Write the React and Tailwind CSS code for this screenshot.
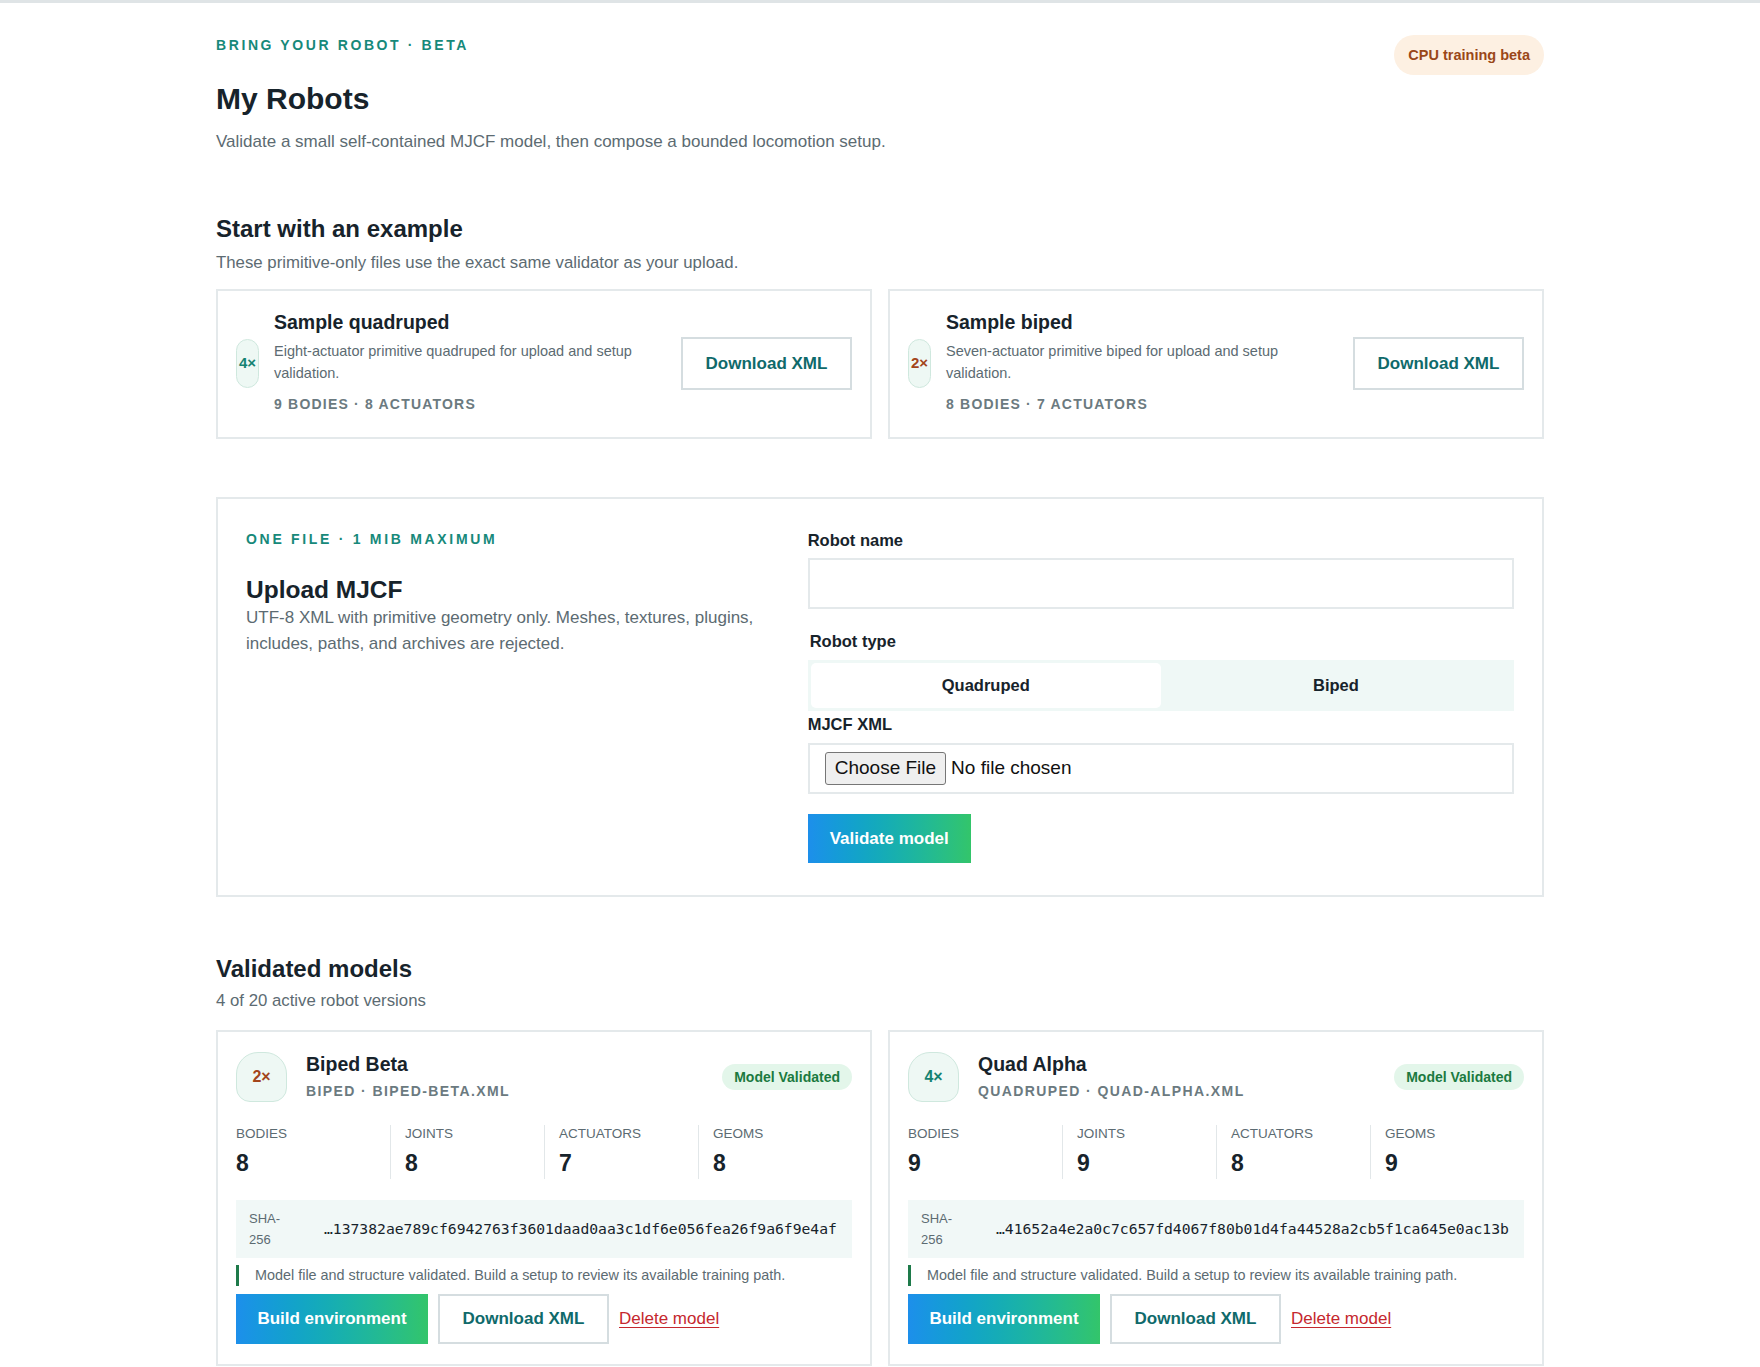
import { useState } from "react";

const samples = [
  {
    id: "quad",
    badge: "4×",
    badgeColor: "text-[#148272]",
    title: "Sample quadruped",
    desc: "Eight-actuator primitive quadruped for upload and setup validation.",
    meta: "9 bodies · 8 actuators",
  },
  {
    id: "biped",
    badge: "2×",
    badgeColor: "text-[#a3451b]",
    title: "Sample biped",
    desc: "Seven-actuator primitive biped for upload and setup validation.",
    meta: "8 bodies · 7 actuators",
  },
];

const models = [
  {
    id: "biped-beta",
    badge: "2×",
    badgeColor: "text-[#a3451b]",
    name: "Biped Beta",
    meta: "Biped · biped-beta.xml",
    stats: { Bodies: 8, Joints: 8, Actuators: 7, Geoms: 8 },
    sha: "…137382ae789cf6942763f3601daad0aa3c1df6e056fea26f9a6f9e4af",
  },
  {
    id: "quad-alpha",
    badge: "4×",
    badgeColor: "text-[#148272]",
    name: "Quad Alpha",
    meta: "Quadruped · quad-alpha.xml",
    stats: { Bodies: 9, Joints: 9, Actuators: 8, Geoms: 9 },
    sha: "…41652a4e2a0c7c657fd4067f80b01d4fa44528a2cb5f1ca645e0ac13b",
  },
];

const SampleCard = ({ sample }) => (
  <div className="flex items-center border-2 border-[#e4e9eb] bg-white px-[18px] pb-[23px] pt-[18px]">
    <div
      className={`mt-[4px] flex h-[49px] w-[23px] shrink-0 items-center justify-center rounded-full border border-[#cfe8de] bg-[#eef8f4] text-[15px] font-bold ${sample.badgeColor}`}
    >
      {sample.badge}
    </div>
    <div className="ml-[15px] min-w-0 flex-1 pr-6">
      <h3 className="text-[19.5px] font-bold leading-[26px] text-[#17232b]">
        {sample.title}
      </h3>
      <p className="mt-[5px] text-[14.5px] leading-[22px] text-[#5c6b72]">
        {sample.desc}
      </p>
      <p className="mt-[10px] text-[14px] font-semibold uppercase leading-[20px] tracking-[1.2px] text-[#6b7a80]">
        {sample.meta}
      </p>
    </div>
    <button className="mt-[4px] h-[53px] w-[171px] shrink-0 border-2 border-[#d5dde0] bg-white text-[17px] font-bold text-[#0f6a6b]">
      Download XML
    </button>
  </div>
);

const ModelCard = ({ model }) => (
  <div className="border-2 border-[#e4e9eb] bg-white px-[18px] py-5">
    <div className="flex items-center">
      <div
        className={`flex h-[50px] w-[51px] shrink-0 items-center justify-center rounded-t-[22px] rounded-b-[14px] border border-[#cfe8de] bg-[#eef8f4] text-[16px] font-bold ${model.badgeColor}`}
      >
        {model.badge}
      </div>
      <div className="ml-[19px] flex-1">
        <h3 className="text-[19.5px] font-bold leading-[22px] text-[#17232b]">
          {model.name}
        </h3>
        <p className="mt-[6px] text-[14px] font-semibold uppercase leading-[20px] tracking-[1.4px] text-[#6b7a80]">
          {model.meta}
        </p>
      </div>
      <span className="rounded-full bg-[#e3f6ea] px-3 py-[4px] text-[14px] font-bold leading-[18px] text-[#1b7a40]">
        Model Validated
      </span>
    </div>

    <div className="mt-[23px] grid grid-cols-4">
      {Object.entries(model.stats).map(([label, value], i) => (
        <div
          key={label}
          className={i === 0 ? "" : "border-l border-[#e2e7e9] pl-[14px]"}
        >
          <div className="text-[13.5px] uppercase leading-[18px] text-[#5c6b72]">
            {label}
          </div>
          <div className="mt-[4px] text-[23px] font-bold leading-[32px] text-[#17232b]">
            {value}
          </div>
        </div>
      ))}
    </div>

    <div className="mt-[21px] flex items-center gap-[35px] bg-[#f1f8f7] py-[8px] pl-[13px] pr-[10px]">
      <span className="w-[40px] shrink-0 text-[13px] leading-[21px] text-[#5c6b72]">
        SHA-256
      </span>
      <span className="whitespace-nowrap font-['DejaVu_Sans_Mono',monospace] text-[14.7px] text-[#17232b]">
        {model.sha}
      </span>
    </div>

    <p className="mt-[7px] border-l-[3px] border-[#1e7a4a] pl-[16px] text-[14.4px] leading-[21px] text-[#5c6b72]">
      Model file and structure validated. Build a setup to review its
      available training path.
    </p>

    <div className="mt-2 flex items-center gap-[10px]">
      <button className="h-[50px] w-[192px] bg-linear-to-r from-[#1d8feb] to-[#33c56a] text-[17px] font-bold text-white">
        Build environment
      </button>
      <button className="h-[50px] w-[171px] border-2 border-[#d5dde0] bg-white text-[17px] font-bold text-[#0f6a6b]">
        Download XML
      </button>
      <a
        href="#"
        className="text-[17px] text-[#c5282e] underline underline-offset-[3px]"
      >
        Delete model
      </a>
    </div>
  </div>
);

export default function App() {
  const [robotType, setRobotType] = useState("quadruped");

  return (
    <div className="min-h-screen border-t-[3px] border-[#dfe4e6] bg-white font-['Liberation_Sans',Arial,sans-serif] text-[#17232b]">
      <main className="mx-auto max-w-[1376px] px-6 pb-10 pt-[33px]">
        {/* header */}
        <div className="flex items-start justify-between">
          <div>
            <p className="text-[14px] font-bold uppercase leading-[18px] tracking-[2.6px] text-[#17897a]">
              Bring your robot · Beta
            </p>
            <h1 className="mt-[27px] text-[30px] font-bold leading-[36px]">
              My Robots
            </h1>
            <p className="mt-[12px] text-[17px] leading-[26px] text-[#5c6b72]">
              Validate a small self-contained MJCF model, then compose a
              bounded locomotion setup.
            </p>
          </div>
          <span className="mt-[-1px] rounded-full bg-[#fdf0e2] px-[14px] py-[11px] text-[14.5px] font-bold leading-[18px] text-[#9a4718]">
            CPU training beta
          </span>
        </div>

        {/* examples */}
        <section className="mt-[59px]">
          <h2 className="text-[24px] font-bold leading-[30px]">
            Start with an example
          </h2>
          <p className="mt-[7px] text-[16.8px] leading-[24px] text-[#5c6b72]">
            These primitive-only files use the exact same validator as your
            upload.
          </p>
          <div className="mt-[14px] grid grid-cols-2 gap-4">
            {samples.map((s) => (
              <SampleCard key={s.id} sample={s} />
            ))}
          </div>
        </section>

        {/* upload form */}
        <section className="mt-[58px] grid grid-cols-[0.75fr_1fr] gap-8 border-2 border-[#e4e9eb] px-[28px] pb-[32px] pt-[28px]">
          <div>
            <p className="mt-[3px] text-[14px] font-bold uppercase leading-[18px] tracking-[2.7px] text-[#17897a]">
              One file · 1 MiB maximum
            </p>
            <h2 className="mt-[27px] text-[24.5px] font-bold leading-[30px]">
              Upload MJCF
            </h2>
            <p className="text-[17px] leading-[26px] text-[#5c6b72]">
              UTF-8 XML with primitive geometry only. Meshes, textures,
              plugins, includes, paths, and archives are rejected.
            </p>
          </div>

          <form className="flex flex-col" onSubmit={(e) => e.preventDefault()}>
            <label className="mt-[2px] text-[16.5px] font-bold leading-[22px]">
              Robot name
            </label>
            <input
              type="text"
              className="mt-[7px] h-[51px] border-2 border-[#e4e9eb] px-4 text-[17px] outline-none"
            />

            <fieldset className="mt-[21px]">
              <legend className="ml-[2px] text-[16.5px] font-bold leading-[22px]">
                Robot type
              </legend>
              <div className="mt-[8px] grid h-[51px] grid-cols-2 bg-[#eff8f6] p-[3px]">
                <button
                  type="button"
                  onClick={() => setRobotType("quadruped")}
                  className={`rounded-[5px] text-[16.5px] font-bold ${
                    robotType === "quadruped" ? "bg-white" : ""
                  }`}
                >
                  Quadruped
                </button>
                <button
                  type="button"
                  onClick={() => setRobotType("biped")}
                  className={`rounded-[5px] text-[16.5px] font-bold ${
                    robotType === "biped" ? "bg-white" : ""
                  }`}
                >
                  Biped
                </button>
              </div>
            </fieldset>

            <label className="mt-[2px] text-[16.5px] font-bold leading-[22px]">
              MJCF XML
            </label>
            <div className="mt-[8px] flex h-[51px] items-center border-2 border-[#e4e9eb] px-[15px]">
              <input
                type="file"
                accept=".xml"
                className="text-[19px] text-[#111] file:mr-[5px] file:rounded-[3px] file:border file:border-[#767676] file:bg-[#efefef] file:px-[9px] file:py-[1px] file:text-[#111]"
              />
            </div>

            <button
              type="submit"
              className="mt-[20px] h-[49px] w-[163px] bg-linear-to-r from-[#1d8feb] to-[#33c56a] text-[17px] font-bold text-white"
            >
              Validate model
            </button>
          </form>
        </section>

        {/* validated models */}
        <section className="mt-[57px]">
          <h2 className="text-[24px] font-bold leading-[30px]">
            Validated models
          </h2>
          <p className="mt-[5px] text-[16.8px] leading-[24px] text-[#5c6b72]">
            4 of 20 active robot versions
          </p>
          <div className="mt-[17px] grid grid-cols-2 gap-4">
            {models.map((m) => (
              <ModelCard key={m.id} model={m} />
            ))}
          </div>
        </section>
      </main>
    </div>
  );
}
